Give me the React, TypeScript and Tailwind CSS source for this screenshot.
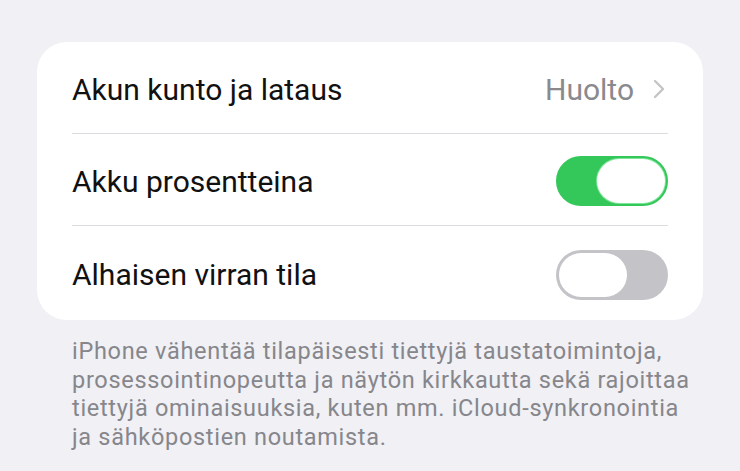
import React from 'react';

const Toggle: React.FC<{ on: boolean }> = ({ on }) => (
  <div
    className={`flex h-[50px] w-[112px] items-center rounded-full border-2 p-[1px] ${
      on ? 'justify-end border-[#34c759] bg-[#34c759]' : 'justify-start border-[#c4c4c8] bg-[#c4c4c8]'
    }`}
  >
    <div className={`h-[44px] w-[68px] rounded-full bg-white ${on ? 'shadow-[0_0_0_1px_#7ee59a]' : ''}`} />
  </div>
);

const Row: React.FC<{ label: string; children?: React.ReactNode; last?: boolean }> = ({ label, children, last }) => (
  <div className="px-[35px]">
    <div className={`flex items-center justify-between pt-[3px] ${last ? 'h-[94px]' : 'h-[92px] border-b border-[#dcdce0]'}`}>
      <span className="text-[30px] text-[#111]">{label}</span>
      {children}
    </div>
  </div>
);

export default function App() {
  return (
    <div className="min-h-[471px] bg-[#f0f0f5] px-[37px] pt-[42px]" style={{ fontFamily: 'Roboto, "Noto Sans", sans-serif' }}>
      <div className="w-[666px] rounded-[30px] bg-white">
        <Row label="Akun kunto ja lataus">
          <div className="flex items-center gap-[19px] pr-[3px]">
            <span className="text-[30px] text-[#8a8a8e]">Huolto</span>
            <svg width="12" height="20" viewBox="0 0 12 20" fill="none">
              <path d="M2 2l8 8-8 8" stroke="#c4c4c7" strokeWidth="2.4" strokeLinecap="round" strokeLinejoin="round" />
            </svg>
          </div>
        </Row>
        <Row label="Akku prosentteina">
          <Toggle on />
        </Row>
        <Row label="Alhaisen virran tila" last>
          <Toggle on={false} />
        </Row>
      </div>
      <p className="mt-[17px] whitespace-nowrap px-[35px] text-[23.5px] leading-[28.5px] tracking-[0.7px] text-[#86868b]">
        iPhone vähentää tilapäisesti tiettyjä taustatoimintoja,
        <br />
        prosessointinopeutta ja näytön kirkkautta sekä rajoittaa
        <br />
        tiettyjä ominaisuuksia, kuten mm. iCloud-synkronointia
        <br />
        ja sähköpostien noutamista.
      </p>
    </div>
  );
}
